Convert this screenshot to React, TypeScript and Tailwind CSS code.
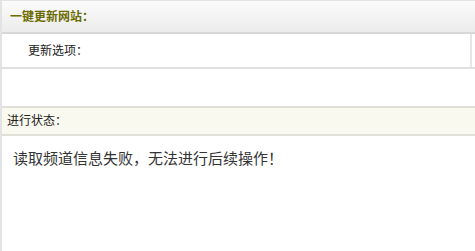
export default function App() {
  return (
    <div
      className="h-[251px] w-[475px] overflow-hidden bg-white text-[#333]"
      style={{ fontFamily: '"Liberation Sans", "Noto Sans CJK SC", sans-serif' }}
    >
      <div className="h-full border-l-2 border-t border-[#e3e3e3]">
        {/* header */}
        <div className="flex h-[33px] items-center border-b-2 border-[#d8d8d8] bg-gradient-to-b from-[#fbfbfb] to-[#ececec] pl-2">
          <span className="text-[12px] font-bold text-[#6b6b00]">一键更新网站：</span>
        </div>

        {/* options row */}
        <div className="flex h-[35px] items-center border-b-2 border-[#e0e0e0]">
          <div className="flex h-full flex-1 items-center border-r-2 border-[#e6e6e6] pl-[26px]">
            <span className="text-[12px] text-[#222]">更新选项：</span>
          </div>
          <div className="w-[3px]" />
        </div>

        <div className="h-[37px]" />

        {/* status */}
        <div className="flex h-[30px] items-center border-y-2 border-[#e0e0d8] bg-[#f9f9ef] pl-[5px]">
          <span className="text-[12px] text-[#222]">进行状态：</span>
        </div>

        <div className="pl-[11px] pt-[13px]">
          <p className="text-[15px] leading-[20px] text-[#333]">读取频道信息失败，无法进行后续操作！</p>
        </div>
      </div>
    </div>
  );
}
